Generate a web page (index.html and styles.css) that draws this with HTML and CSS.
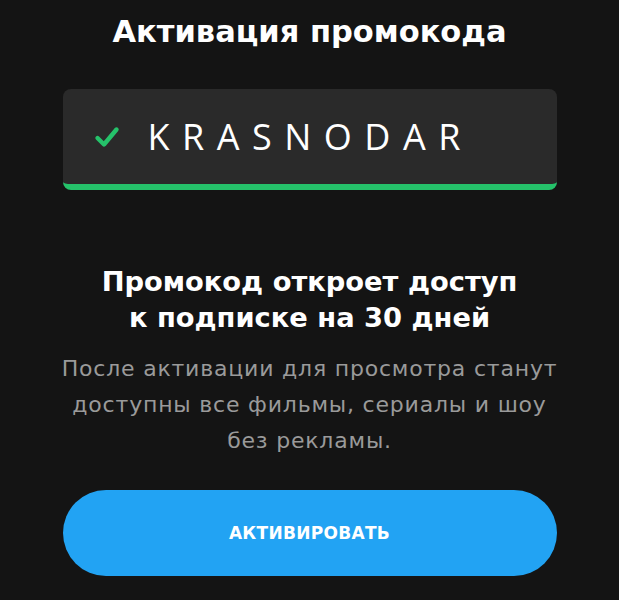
FILE: index.html
```html
<!DOCTYPE html>
<html lang="ru">
<head>
<meta charset="utf-8">
<link rel="stylesheet" href="styles.css">
</head>
<body>
<main class="page">
  <h1 class="title">Активация промокода</h1>
  <div class="code-field">
    <svg class="check" width="26" height="24" viewBox="0 0 26 24" aria-hidden="true">
      <path d="M3.5 13 L10 19.5 L22.5 4.5" fill="none" stroke="#25c26a" stroke-width="4.4" stroke-linecap="round" stroke-linejoin="round"/>
    </svg>
    <span class="code">KRASNODAR</span>
  </div>
  <h2 class="subtitle">Промокод откроет доступ<br>к подписке на 30 дней</h2>
  <p class="desc">После активации для просмотра станут доступны все фильмы, сериалы и шоу без рекламы.</p>
  <button class="activate">АКТИВИРОВАТЬ</button>
</main>
</body>
</html>
```
FILE: styles.css
```css
html, body {
  margin: 0;
  padding: 0;
  background: #141414;
}
body {
  font-family: "DejaVu Sans", "Open Sans", sans-serif;
  color: #fff;
}
.page {
  width: 494px;
  margin: 0 auto;
  display: flex;
  flex-direction: column;
  align-items: stretch;
}
.title {
  margin: 12px 0 0;
  font-size: 30.5px;
  font-weight: 700;
  line-height: 40px;
  text-align: center;
}
.code-field {
  margin-top: 37px;
  height: 101px;
  box-sizing: border-box;
  background: #2a2a2a;
  border-radius: 8px;
  border-bottom: 6px solid #25c26a;
  display: flex;
  align-items: center;
  padding: 0 0 0 31px;
}
.check {
  display: block;
  flex: none;
}
.code {
  margin-left: 28px;
  font-family: "Open Sans", sans-serif;
  font-size: 36px;
  font-weight: 400;
  letter-spacing: 12.5px;
  line-height: 1;
}
.subtitle {
  margin: 74px 0 0;
  font-size: 27.3px;
  font-weight: 700;
  line-height: 36px;
  text-align: center;
}
.desc {
  margin: 15px -6px 0;
  font-size: 22px;
  letter-spacing: 0.8px;
  line-height: 36px;
  color: #9a9a9a;
  text-align: center;
}
.activate {
  margin-top: 31px;
  height: 86px;
  border: none;
  border-radius: 43px;
  background: #22a3f3;
  color: #fff;
  font-family: "DejaVu Sans", sans-serif;
  font-size: 17px;
  font-weight: 600;
  letter-spacing: 0.3px;
}
```
